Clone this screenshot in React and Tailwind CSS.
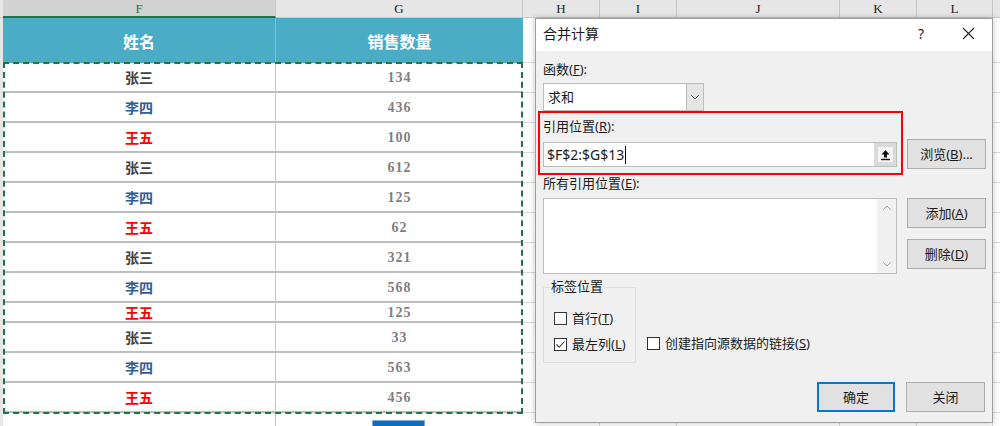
import React from "react";

const nameColor = {
  gray: "text-[#404040]",
  blue: "text-[#2f5d96]",
  red: "text-[#ff0000]",
};

const rows = [
  { name: "张三", qty: "134", c: "gray", h: "h-[30px]" },
  { name: "李四", qty: "436", c: "blue", h: "h-[30px]" },
  { name: "王五", qty: "100", c: "red", h: "h-[30px]" },
  { name: "张三", qty: "612", c: "gray", h: "h-[30px]" },
  { name: "李四", qty: "125", c: "blue", h: "h-[30px]" },
  { name: "王五", qty: "62", c: "red", h: "h-[30px]" },
  { name: "张三", qty: "321", c: "gray", h: "h-[30px]" },
  { name: "李四", qty: "568", c: "blue", h: "h-[30px]" },
  { name: "王五", qty: "125", c: "red", h: "h-[20px]" },
  { name: "张三", qty: "33", c: "gray", h: "h-[30px]" },
  { name: "李四", qty: "563", c: "blue", h: "h-[30px]" },
  { name: "王五", qty: "456", c: "red", h: "h-[30px]" },
];

const BlankCells = () => (
  <>
    <div className="w-[12px] shrink-0 border-b border-[#d9d9d9]" />
    <div className="w-[65px] shrink-0 border-r border-b border-[#d9d9d9]" />
    <div className="w-[77px] shrink-0 border-r border-b border-[#d9d9d9]" />
    <div className="w-[163px] shrink-0 border-r border-b border-[#d9d9d9]" />
    <div className="w-[77px] shrink-0 border-r border-b border-[#d9d9d9]" />
    <div className="w-[76px] shrink-0 border-r border-b border-[#d9d9d9]" />
    <div className="flex-1 border-b border-[#d9d9d9]" />
  </>
);

const Check = ({ checked }) => (
  <span className="w-[13px] h-[13px] border border-[#333] bg-white flex items-center justify-center shrink-0">
    {checked && (
      <svg width="11" height="11" viewBox="0 0 11 11">
        <path d="M1.5 5.5 L4.2 8.3 L9.5 2.5" fill="none" stroke="#333" strokeWidth="1.1" />
      </svg>
    )}
  </span>
);

const Btn = ({ children, primary, w = "w-[79px]" }) => (
  <div
    className={
      primary
        ? `${w} h-[30px] bg-[#e1e1e1] border-2 border-[#0078d7] flex items-center justify-center`
        : `${w} h-[30px] bg-[#e1e1e1] border border-[#adadad] flex items-center justify-center`
    }
  >
    {children}
  </div>
);

const Dialog = () => (
  <div className="absolute left-[535px] top-[18px] w-[458px] h-[405px] border border-[#a0a0a0] bg-[#f0f0f0] shadow-[0_0_6px_rgba(0,0,0,0.25)] text-[13px] text-[#1a1a1a] font-['Noto_Sans','Noto_Sans_CJK_SC',sans-serif] leading-[17px]">
    <div className="h-[32px] bg-white flex items-center pl-[7px] pb-[3px]">
      <span className="text-[14px] flex-1">合并计算</span>
      <span className="text-[14px] w-[20px] mr-[24px]">?</span>
      <svg width="13" height="13" viewBox="0 0 13 13" className="mr-[17px]">
        <path d="M1 1 L12 12 M12 1 L1 12" stroke="#222" strokeWidth="1.1" />
      </svg>
    </div>
    <div className="pl-[7px]">
      <div className="mt-[10px] h-[17px]">
        函数(<u>F</u>):
      </div>
      <div className="mt-[5px] w-[161px] h-[28px] flex bg-white border border-[#bdbdbd]">
        <span className="flex-1 pl-[4px] flex items-center">求和</span>
        <span className="w-[17px] bg-[#e5e5e5] border-l border-[#bdbdbd] flex items-center justify-center">
          <svg width="10" height="6" viewBox="0 0 10 6">
            <path d="M1 1 L5 5 L9 1" fill="none" stroke="#606060" strokeWidth="1" />
          </svg>
        </span>
      </div>
      <div className="flex -ml-[5px]">
        <div className="w-[365px] border-2 border-[#ff0000] pl-[3px] pt-[5px] pb-[6px]">
          <div className="h-[17px]">
            引用位置(<u>R</u>):
          </div>
          <div className="mt-[7px] w-[354px] h-[25px] flex bg-white border border-[#bdbdbd]">
            <span className="flex-1 pl-[3px] flex items-center text-[14px]">
              $F$2:$G$13
              <span className="w-px h-[18px] bg-black ml-px" />
            </span>
            <span className="w-[22px] bg-[#dadada] flex items-center justify-center">
              <span className="w-[15px] h-[15px] bg-[#f4f4f4] flex items-center justify-center">
                <svg width="11" height="12" viewBox="0 0 11 12">
                  <path d="M5.5 1 L1.5 5.5 H4 V8.5 H7 V5.5 H9.5 Z" fill="#111" />
                  <path d="M1 10.5 H10" stroke="#111" strokeWidth="1.4" />
                </svg>
              </span>
            </span>
          </div>
        </div>
        <div className="ml-[4px] mt-[28px]">
          <Btn>
            浏览(<u>B</u>)...
          </Btn>
        </div>
      </div>
      <div className="flex">
        <div className="w-[354px]">
          <div className="mt-0 h-[17px]">
            所有引用位置(<u>E</u>):
          </div>
          <div className="mt-[6px] h-[76px] flex bg-white border border-[#bdbdbd]">
            <span className="flex-1" />
            <span className="w-[19px] bg-[#f0f0f0] flex flex-col items-center justify-between py-[6px]">
              <svg width="10" height="6" viewBox="0 0 10 6">
                <path d="M1 5 L5 1 L9 5" fill="none" stroke="#a8a8a8" strokeWidth="1" />
              </svg>
              <svg width="10" height="6" viewBox="0 0 10 6">
                <path d="M1 1 L5 5 L9 1" fill="none" stroke="#a8a8a8" strokeWidth="1" />
              </svg>
            </span>
          </div>
        </div>
        <div className="ml-[10px] pt-[23px] flex flex-col gap-[11px]">
          <Btn>
            添加(<u>A</u>)
          </Btn>
          <Btn>
            删除(<u>D</u>)
          </Btn>
        </div>
      </div>
      <div className="flex mt-[13px]">
        <div className="relative w-[93px] h-[76px] border border-[#dcdcdc] pl-[10px] pt-[22px] flex flex-col gap-[9px]">
          <span className="absolute left-[6px] -top-[10px] px-px bg-[#f0f0f0]">标签位置</span>
          <label className="flex items-center gap-[5px] h-[17px]">
            <Check />
            <span>
              首行(<u>T</u>)
            </span>
          </label>
          <label className="flex items-center gap-[5px] h-[17px]">
            <Check checked />
            <span>
              最左列(<u>L</u>)
            </span>
          </label>
        </div>
        <label className="ml-[11px] mt-[48px] flex items-center gap-[5px] h-[17px]">
          <Check />
          <span>
            创建指向源数据的链接(<u>S</u>)
          </span>
        </label>
      </div>
      <div className="flex justify-end gap-[11px] pr-[7px] mt-[19px]">
        <Btn primary w="w-[78px]">
          确定
        </Btn>
        <Btn>关闭</Btn>
      </div>
    </div>
  </div>
);

export default function App() {
  const letters = ["H", "I", "J", "K", "L"];
  const letterW = ["w-[77px]", "w-[77px]", "w-[163px]", "w-[77px]", "w-[76px]"];
  return (
    <div className="relative w-[1000px] h-[426px] overflow-hidden bg-white font-['Noto_Sans_CJK_SC',sans-serif]">
      {/* column headers */}
      <div className="flex h-[18px] text-[13px] font-['Liberation_Serif',serif] leading-none">
        <div className="w-[3px] bg-[#e6e6e6] border-b border-[#c6c6c6]" />
        <div className="w-[273px] bg-[#d2d2d2] border-r border-[#c6c6c6] border-b-2 border-b-[#217346] text-[#217346] flex items-center justify-center">
          F
        </div>
        <div className="w-[247px] bg-[#e6e6e6] border-r border-b border-[#c6c6c6] flex items-center justify-center text-[#222]">
          G
        </div>
        {letters.map((l, i) => (
          <div
            key={l}
            className={`${letterW[i]} bg-[#e6e6e6] border-r border-b border-[#c6c6c6] flex items-center justify-center text-[#222]`}
          >
            {l}
          </div>
        ))}
        <div className="flex-1 bg-[#e6e6e6] border-b border-[#c6c6c6]" />
      </div>

      {/* table header */}
      <div className="flex h-[45px]">
        <div className="w-[3px] bg-[#e6e6e6]" />
        <div className="w-[273px] bg-[#4bacc6] border-r border-[#7cc2d6] flex items-center justify-center text-white font-bold text-[16px]">
          姓名
        </div>
        <div className="w-[247px] bg-[#4bacc6] flex items-center justify-center text-white font-bold text-[16px]">
          销售数量
        </div>
        <BlankCells />
      </div>

      {rows.map((r, i) => (
        <div key={i} className={`flex ${r.h}`}>
          <div className="w-[3px] bg-[#e6e6e6]" />
          <div
            className={`w-[273px] border-r border-[#c8c8c8] border-b-2 border-b-[#bdbdbd] flex items-center justify-center font-bold text-[14px] ${nameColor[r.c]}`}
          >
            {r.name}
          </div>
          <div className="w-[247px] border-b-2 border-[#bdbdbd] flex items-center justify-center font-bold text-[14px] text-[#7f7f7f] font-['Liberation_Serif',serif] tracking-[1px]">
            {r.qty}
          </div>
          <BlankCells />
        </div>
      ))}

      <div className="flex h-[20px]">
        <div className="w-[3px] bg-[#e6e6e6]" />
        <div className="w-[273px] border-r border-[#c8c8c8]" />
        <div className="w-[247px] pl-[96px] pt-[7px]">
          <div className="w-[53px] h-[10px] bg-[#0f6cbd] border border-[#7eaee0]" />
        </div>
        <BlankCells />
      </div>

      {/* copy selection marquee */}
      <div className="absolute left-[3px] top-[62px] w-[520px] h-[352px] border-2 border-dashed border-[#217346] pointer-events-none" />

      <Dialog />
    </div>
  );
}
